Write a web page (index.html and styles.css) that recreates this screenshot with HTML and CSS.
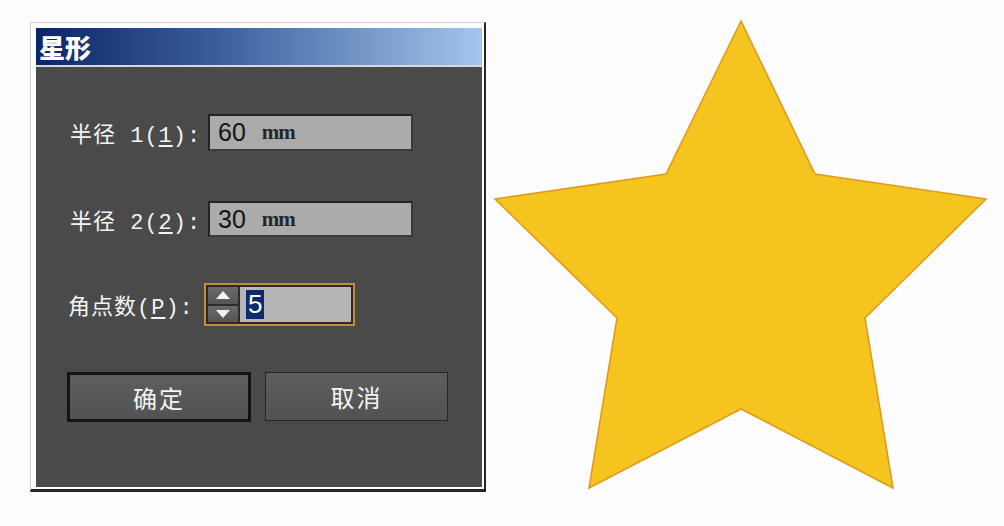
FILE: index.html
```html
<!DOCTYPE html>
<html>
<head>
  <meta charset="utf-8">
  <meta name="viewport" content="width=device-width, initial-scale=1.0">
  <title>星形</title>
  <link rel="stylesheet" href="styles.css">
</head>
<body>
<div class="dialog">
  <div class="titlebar">星形</div>
  <div class="panel">
    <div class="row">
      <label class="label">半径 1(<u>1</u>):</label>
      <div class="field"><span class="num">60</span><span class="unit">mm</span></div>
    </div>
    <div class="row row-2">
      <label class="label">半径 2(<u>2</u>):</label>
      <div class="field"><span class="num">30</span><span class="unit">mm</span></div>
    </div>
    <div class="row row-3">
      <label class="label label-short">角点数(<u>P</u>):</label>
      <div class="spinner">
        <div class="arrows">
          <span class="arrow">
            <svg width="14" height="8" viewBox="0 0 14 8"><polygon points="7,0 14,8 0,8" fill="#f2f2f2"/></svg>
          </span>
          <span class="arrow">
            <svg width="14" height="8" viewBox="0 0 14 8"><polygon points="0,0 14,0 7,8" fill="#f2f2f2"/></svg>
          </span>
        </div>
        <div class="spin-value"><span class="selected">5</span></div>
      </div>
    </div>
    <div class="buttons">
      <button class="btn btn-default">确定</button>
      <button class="btn">取消</button>
    </div>
  </div>
</div>

<svg class="star" width="518" height="526" viewBox="486 0 518 526">
  <polygon points="741,21 815,174 986,199 865,318 893,488 741,409 589,488 617,318 495,199 666,174"
           fill="#f6c41f" stroke="#e09b1c" stroke-width="1.6" stroke-linejoin="miter"/>
</svg>
</body>
</html>
```

FILE: styles.css
```css
body { margin: 0; padding: 0; width: 1004px; height: 526px; background: #fdfdfe; display: flex; align-items: flex-start; overflow: hidden; font-family: "Noto Sans CJK SC", sans-serif; }

/* window frame */
.dialog { box-sizing: border-box; margin: 22px 0 0 30px; width: 456px; height: 470px; background: #fff; border: 1px solid #cfcfcf; border-right: 2px solid #262626; border-bottom: 3px solid #262626; padding: 5px 2px 2px 5px; display: flex; flex-direction: column; }
.titlebar { height: 37px; flex-shrink: 0; background: linear-gradient(to right, #0b2566 0%, #3a5e9a 40%, #a3c6ef 100%); color: #fff; font-size: 26px; font-weight: 900; line-height: 37px; padding-left: 3px; border-bottom: 2px solid #d8d8d8; }
.panel { flex: 1; background: #4a4a4a; padding: 47px 0 0 34px; }

/* form rows */
.row { display: flex; align-items: center; height: 37px; }
.row-2 { margin-top: 50px; height: 36px; }
.row-3 { margin-top: 46px; height: 43px; }
.label { width: 138px; color: #f4f4f4; font-size: 22px; letter-spacing: 1px; font-family: "Liberation Mono", "Noto Sans CJK SC", monospace; white-space: nowrap; }
.label-short { width: 136px; margin-left: -2px; }
.label u { text-underline-offset: 3px; }
.field { box-sizing: border-box; width: 205px; height: 100%; background: #ababab; border: 2px solid #242424; border-right-color: #3a3a3a; border-bottom-color: #3a3a3a; display: flex; align-items: center; padding-left: 8px; }
.num { font-family: "Liberation Sans", sans-serif; font-size: 25px; color: #141414; }
.unit { font-family: "Liberation Serif", serif; font-weight: bold; font-size: 21px; color: #262626; margin-left: 16px; letter-spacing: -1px; }

/* spin box */
.spinner { box-sizing: border-box; width: 151px; height: 43px; border: 2px solid #c8893a; background: #2b2b2b; padding: 2px; display: flex; }
.arrows { width: 30px; display: flex; flex-direction: column; gap: 2px; }
.arrow { flex: 1; background: linear-gradient(#6a6a6a, #555); display: flex; align-items: center; justify-content: center; }
.spin-value { flex: 1; margin-left: 2px; background: #b6b6b6; display: flex; align-items: center; padding-left: 6px; }
.selected { background: #0c2a6e; color: #fff; font-family: "Liberation Sans", sans-serif; font-size: 26px; line-height: 29px; padding: 0 2px; }

/* buttons */
.buttons { display: flex; gap: 14px; margin: 46px 0 0 -3px; }
.btn { box-sizing: border-box; width: 183px; height: 49px; background: linear-gradient(#5e5e5e, #525252); border: 1px solid #262626; color: #f4f4f4; font-family: "Noto Sans CJK SC", sans-serif; font-size: 24px; letter-spacing: 2px; padding: 0; }
.btn-default { width: 184px; height: 50px; border: 3px solid #141414; }

.star { flex-shrink: 0; }
```
